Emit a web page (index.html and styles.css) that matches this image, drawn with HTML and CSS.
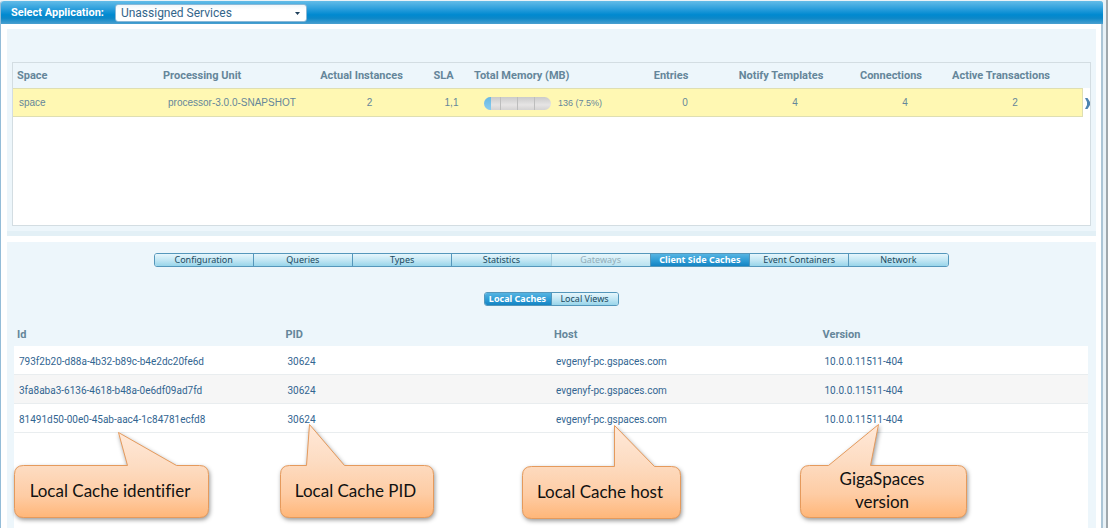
FILE: index.html
```html
<!DOCTYPE html>
<html lang="en">
<head>
<meta charset="utf-8">
<title>Spaces</title>
<link rel="stylesheet" href="styles.css">
</head>
<body>
<div class="window">
  <header class="app-bar">
    <label class="app-label" for="app">Select Application:</label>
    <span class="app-picker">
      <select id="app" class="app-select"><option>Unassigned Services</option></select>
      <svg class="app-arrow" viewBox="0 0 5 3" aria-hidden="true"><path d="M0 0h5L2.500 3z"/></svg>
    </span>
  </header>

  <main class="content">
    <section class="panel panel-spaces">
      <div class="grid-box">
        <table class="spaces">
          <colgroup>
            <col class="w-space"><col class="w-unit"><col class="w-inst"><col class="w-sla"><col class="w-mem">
            <col class="w-small"><col class="w-notify"><col class="w-small"><col class="w-active"><col class="w-more">
          </colgroup>
          <thead>
            <tr><th class="first">Space</th><th class="unit-head">Processing Unit</th><th class="mid">Actual Instances</th><th class="mid">SLA</th><th class="mem-head">Total Memory (MB)</th><th class="mid">Entries</th><th class="mid">Notify Templates</th><th class="mid">Connections</th><th class="mid active">Active Transactions</th><th></th></tr>
          </thead>
          <tbody>
            <tr>
              <td class="first">space</td><td class="unit">processor-3.0.0-SNAPSHOT</td><td class="mid near">2</td><td class="mid near">1,1</td>
              <td class="mem"><div class="mem-line"><span class="meter"><span class="meter-fill" style="width:8%"></span><i></i><i></i><i></i><i></i></span><span class="mem-text">136 (7.5%)</span></div></td>
              <td class="mid far">0</td><td class="mid far">4</td><td class="mid far">4</td><td class="mid far active">2</td>
              <td class="more"><svg class="more-icon" viewBox="0 0 5 11" aria-hidden="true"><path d="M0 0H2.500L5 4V7L2.500 11H0L2 7V4Z"/></svg></td>
            </tr>
          </tbody>
        </table>
      </div>
    </section>

    <section class="panel panel-details">
      <nav class="tabs">
        <button class="tab">Configuration</button><button class="tab">Queries</button><button class="tab">Types</button><button class="tab">Statistics</button><button class="tab" disabled>Gateways</button><button class="tab selected">Client Side Caches</button><button class="tab">Event Containers</button><button class="tab">Network</button>
      </nav>
      <nav class="tabs subtabs">
        <button class="tab selected">Local Caches</button><button class="tab">Local Views</button>
      </nav>
      <div class="cache-area">
        <table class="caches">
          <thead><tr><th>Id</th><th>PID</th><th>Host</th><th>Version</th></tr></thead>
          <tbody>
            <tr><td>793f2b20-d88a-4b32-b89c-b4e2dc20fe6d</td><td>30624</td><td>evgenyf-pc.gspaces.com</td><td>10.0.0.11511-404</td></tr>
            <tr><td>3fa8aba3-6136-4618-b48a-0e6df09ad7fd</td><td>30624</td><td>evgenyf-pc.gspaces.com</td><td>10.0.0.11511-404</td></tr>
            <tr><td>81491d50-00e0-45ab-aac4-1c84781ecfd8</td><td>30624</td><td>evgenyf-pc.gspaces.com</td><td>10.0.0.11511-404</td></tr>
          </tbody>
        </table>
      </div>
    </section>
  </main>
</div>

<svg class="defs" aria-hidden="true"><defs>
  <linearGradient id="peach" x1="0" y1="0" x2="0" y2="1"><stop offset="0" stop-color="#ffe9d9"/><stop offset=".4" stop-color="#fddcc2"/><stop offset=".75" stop-color="#fecca4"/><stop offset="1" stop-color="#ffb678"/></linearGradient>
</defs></svg>

<aside class="callout callout-id">
  <svg class="bubble" viewBox="0 0 195 86"><path d="M9.500 33.500H113.500L104.500.500L162.500 33.500H185.500Q194.500 33.500 194.500 42.500V76.500Q194.500 85.500 185.500 85.500H9.500Q.500 85.500 .500 76.500V42.500Q.500 33.500 9.500 33.500Z"/></svg>
  <p class="note">Local Cache identifier</p>
</aside>
<aside class="callout callout-pid">
  <svg class="bubble" viewBox="0 0 154 94"><path d="M9.500 41.500H26.500L29.500.500L64.500 41.500H144.500Q153.500 41.500 153.500 50.500V84.500Q153.500 93.500 144.500 93.500H9.500Q.500 93.500 .500 84.500V50.500Q.500 41.500 9.500 41.500Z"/></svg>
  <p class="note">Local Cache PID</p>
</aside>
<aside class="callout callout-host">
  <svg class="bubble" viewBox="0 0 159 94"><path d="M9.500 41.500H92.500V.500L132.500 41.500H149.500Q158.500 41.500 158.500 50.500V84.500Q158.500 93.500 149.500 93.500H9.500Q.500 93.500 .500 84.500V50.500Q.500 41.500 9.500 41.500Z"/></svg>
  <p class="note">Local Cache host</p>
</aside>
<aside class="callout callout-version">
  <svg class="bubble" viewBox="0 0 167 94"><path d="M9.500 41.500H28.500L78.500.500L70.500 41.500H157.500Q166.500 41.500 166.500 50.500V84.500Q166.500 93.500 157.500 93.500H9.500Q.500 93.500 .500 84.500V50.500Q.500 41.500 9.500 41.500Z"/></svg>
  <p class="note">GigaSpaces<br>version</p>
</aside>
</body>
</html>
```
FILE: styles.css
```css
* { box-sizing: border-box; }

body {
  margin: 0;
  min-height: 100vh;
  position: relative;
  display: flex;
  padding-top: 1px;
  background: #e9f2f7;
  border-right: 2px solid #9fa8ad;
  font: 11px/14px Roboto, Arial, sans-serif;
  color: #65869a;
}

.window {
  flex: 1;
  display: flex;
  flex-direction: column;
  margin-right: 3px;
  background: #fff;
  border-left: 1px solid #93bcd8;
  border-right: 2px solid #abc5d6;
  border-radius: 3px 3px 0 0;
}

.app-bar {
  display: flex;
  align-items: center;
  gap: 11px;
  height: 23px;
  margin: 0 -2px 0 0;
  padding-left: 10px;
  background: linear-gradient(#63bce8, #2a9edc 35%, #0089d0 60%, #0d88c8 75%, #4ba0d0);
  border-radius: 3px 3px 0 0;
}
.app-label { color: #fff; font-weight: bold; font-size: 11px; }
.app-picker { position: relative; display: flex; }
.app-select {
  appearance: none;
  width: 192px;
  height: 18px;
  padding: 0 5px;
  border: 1px solid #8ab8d6;
  border-radius: 3px;
  background: linear-gradient(#f0f6fa, #fff 30%);
  color: #33658a;
  font: 12px/14px Roboto, Arial, sans-serif;
}
.app-arrow { position: absolute; right: 7px; top: 8px; width: 5px; height: 3px; fill: #20415c; }

.content { flex: 1; display: flex; flex-direction: column; gap: 6px; padding: 5px 5px 0 6px; }
.panel { background: #edf6fb; }

.panel-spaces { padding: 33px 5px 5px; border-bottom: 5px solid #e3f0f6; }
.grid-box { height: 164px; background: #fff; border: 1px solid #d3dde2; }

table { width: 100%; table-layout: fixed; border-collapse: separate; border-spacing: 0; }
th, td { padding: 0; text-align: left; white-space: nowrap; }
th { font-weight: bold; }

.w-space { width: 145px; }
.w-unit { width: 150px; }
.w-inst { width: 107px; }
.w-sla { width: 57px; }
.w-mem { width: 150px; }
.w-small { width: 98px; }
.w-notify { width: 122px; }
.w-active { width: 142px; }
.w-more { width: 8px; }

.spaces th { height: 25px; background: #edf6fb; }
.spaces td { height: 29px; padding-top: 1px; background: #fff8b3; border-top: 1px solid #dfdfb2; border-bottom: 1px solid #dfdfb2; font: 10px/14px "Liberation Sans", Arial, sans-serif; }
.spaces .first { padding-left: 4px; }
.spaces td.first { padding-left: 6px; }
.spaces .unit-head { padding-left: 5px; }
.spaces .unit { padding-left: 10px; }
.spaces .mid { text-align: center; }
.spaces .near { padding-left: 16px; }
.spaces .far { padding-left: 28px; }
.spaces .active { padding-right: 20px; }
.spaces .mem-head { padding-left: 2px; }
.spaces .mem { padding-left: 12px; }
.spaces td.more { background: #fff; border: 0; border-left: 1px solid #dfdfb2; }
.more-icon { display: block; width: 5px; height: 11px; margin-left: auto; fill: #4d83b0; }

.mem-line { display: flex; align-items: center; gap: 7px; }
.mem-text { font-size: 9px; }
.meter {
  position: relative;
  display: flex;
  width: 67px;
  height: 13px;
  overflow: hidden;
  border-radius: 7px;
  background: linear-gradient(#cacaca, #e6e4e4 60%, #d4d3d3);
}
.meter i { flex: 1; border-right: 1px solid #bdbdbd; }
.meter i:last-child { border: 0; }
.meter-fill { position: absolute; inset: 0 auto 0 0; min-width: 7px; background: linear-gradient(#67b8e2, #8acdf0); }

.panel-details { flex: 1; display: flex; flex-direction: column; align-items: center; padding: 11px 8px 0 7px; }

.tabs { display: flex; width: 795px; max-width: 100%; border: 1px solid #5597bb; border-radius: 3px; overflow: hidden; }
.tab {
  flex: 1 1 0;
  height: 12px;
  padding: 0;
  border: 0;
  border-left: 1px solid #5597bb;
  background: linear-gradient(#e6f6fc, #bfe5f3 55%, #98d5ea);
  color: #1b4a60;
  font: 9px/12px "Noto Sans", sans-serif;
  white-space: nowrap;
}
.tab:first-child { border-left: 0; }
.tab:disabled { color: #93adb9; background: linear-gradient(#e8f6fb, #cdebf5 55%, #b9e2f0); border-color: #a5cedf; }
.tab.selected { background: linear-gradient(#56b4e2, #2b99d3 60%, #1584c3); color: #fff; font-weight: bold; }
.subtabs { width: 135px; margin-top: 25px; }

.cache-area { flex: 1; align-self: stretch; margin-top: 16px; background: linear-gradient(#edf6fb 24px, #fff 24px); }
.caches th { height: 24px; padding: 1px 0 0 3px; }
.caches td { height: 29px; padding: 3px 0 0 5px; color: #326591; font: 10px/14px Roboto, sans-serif; border-bottom: 1px solid #e9edef; background: #fff; }
.caches tr:nth-child(even) td { background: #f6f6f6; }

.defs { position: absolute; width: 0; height: 0; }
.callout { position: absolute; display: flex; flex-direction: column; justify-content: flex-end; }
.bubble { position: absolute; inset: 0; width: 100%; height: 100%; overflow: visible; fill: url(#peach); stroke: #e59a5c; filter: drop-shadow(1px 2px 2px rgba(0, 0, 0, .4)); }
.note {
  position: relative;
  display: flex;
  align-items: center;
  justify-content: center;
  height: 54px;
  margin: 0;
  padding: 0 3px 2px 0;
  color: #111;
  font: 17px/23px Lato, sans-serif;
  font-variant-ligatures: none;
  text-align: center;
}
.callout-id { left: 14px; top: 432px; width: 195px; height: 86px; }
.callout-pid { left: 280px; top: 424px; width: 154px; height: 94px; }
.callout-host { left: 522px; top: 425px; width: 159px; height: 94px; }
.callout-version { left: 800px; top: 424px; width: 167px; height: 94px; }
```
